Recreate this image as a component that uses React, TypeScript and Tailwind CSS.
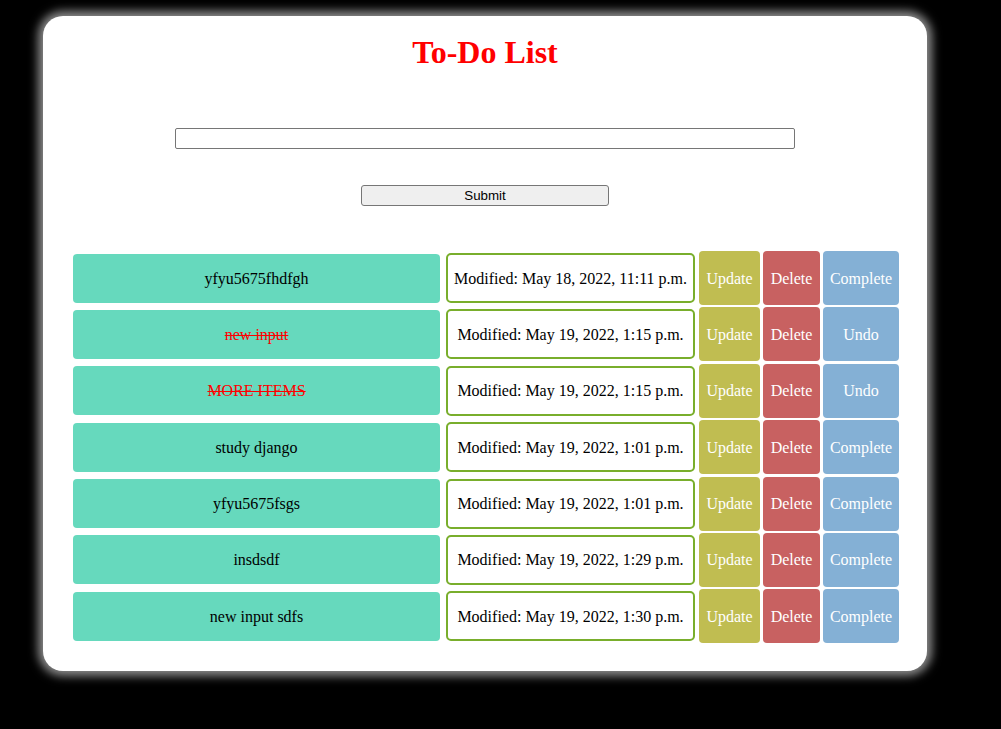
import React from "react";

type Item = { title: string; modified: string; done: boolean };

const items: Item[] = [
  { title: "yfyu5675fhdfgh", modified: "Modified: May 18, 2022, 11:11 p.m.", done: false },
  { title: "new input", modified: "Modified: May 19, 2022, 1:15 p.m.", done: true },
  { title: "MORE ITEMS", modified: "Modified: May 19, 2022, 1:15 p.m.", done: true },
  { title: "study django", modified: "Modified: May 19, 2022, 1:01 p.m.", done: false },
  { title: "yfyu5675fsgs", modified: "Modified: May 19, 2022, 1:01 p.m.", done: false },
  { title: "insdsdf", modified: "Modified: May 19, 2022, 1:29 p.m.", done: false },
  { title: "new input sdfs", modified: "Modified: May 19, 2022, 1:30 p.m.", done: false },
];

export default function App() {
  return (
    <div className="min-h-[729px] w-full bg-black pt-[16px] font-['Liberation_Serif',serif]">
      <div className="ml-[43px] w-[884px] h-[655px] bg-white rounded-[20px] shadow-[0_0_10px_5px_rgba(255,255,255,0.55)] flex flex-col items-center pt-[18px]">
        <h1 className="text-[32px] leading-[37px] font-bold text-[#ff0000] font-['Liberation_Serif',serif]">
          To-Do List
        </h1>
        <input
          type="text"
          className="mt-[57px] w-[620px] h-[21px] border border-[#767676] rounded-[2px] bg-white outline-none"
        />
        <button className="mt-[36px] w-[248px] h-[21px] bg-[#efefef] border border-[#767676] rounded-[3px] text-[13.33px] leading-[19px] text-black font-['Liberation_Sans',Arial,sans-serif]">
          Submit
        </button>
        <div className="mt-[45px] self-start ml-[30px] flex flex-col gap-[2.4px]">
          {items.map((it, i) => (
            <div key={i} className="flex items-center h-[54px]">
              <div className="w-[367px] h-[49px] rounded-[4px] bg-[#66d9bd] flex items-center justify-center text-[16px] text-black pt-[1px]">
                <span className={it.done ? "line-through text-[#ff0000]" : ""}>{it.title}</span>
              </div>
              <div className="ml-[6px] w-[249px] h-[50px] rounded-[5px] border-2 border-[#79ae2c] bg-white flex items-center justify-center text-[16px] text-black pt-[1px]">
                {it.modified}
              </div>
              <button className="ml-[4px] w-[61px] h-[54px] rounded-[4px] bg-[#c0bd51] text-white text-[16px] pt-[1px] font-['Liberation_Serif',serif]">
                Update
              </button>
              <button className="ml-[3px] w-[57px] h-[54px] rounded-[4px] bg-[#c86161] text-white text-[16px] pt-[1px] font-['Liberation_Serif',serif]">
                Delete
              </button>
              <button className="ml-[3px] w-[76px] h-[54px] rounded-[4px] bg-[#84b0d5] text-white text-[16px] pt-[1px] font-['Liberation_Serif',serif]">
                {it.done ? "Undo" : "Complete"}
              </button>
            </div>
          ))}
        </div>
      </div>
    </div>
  );
}
